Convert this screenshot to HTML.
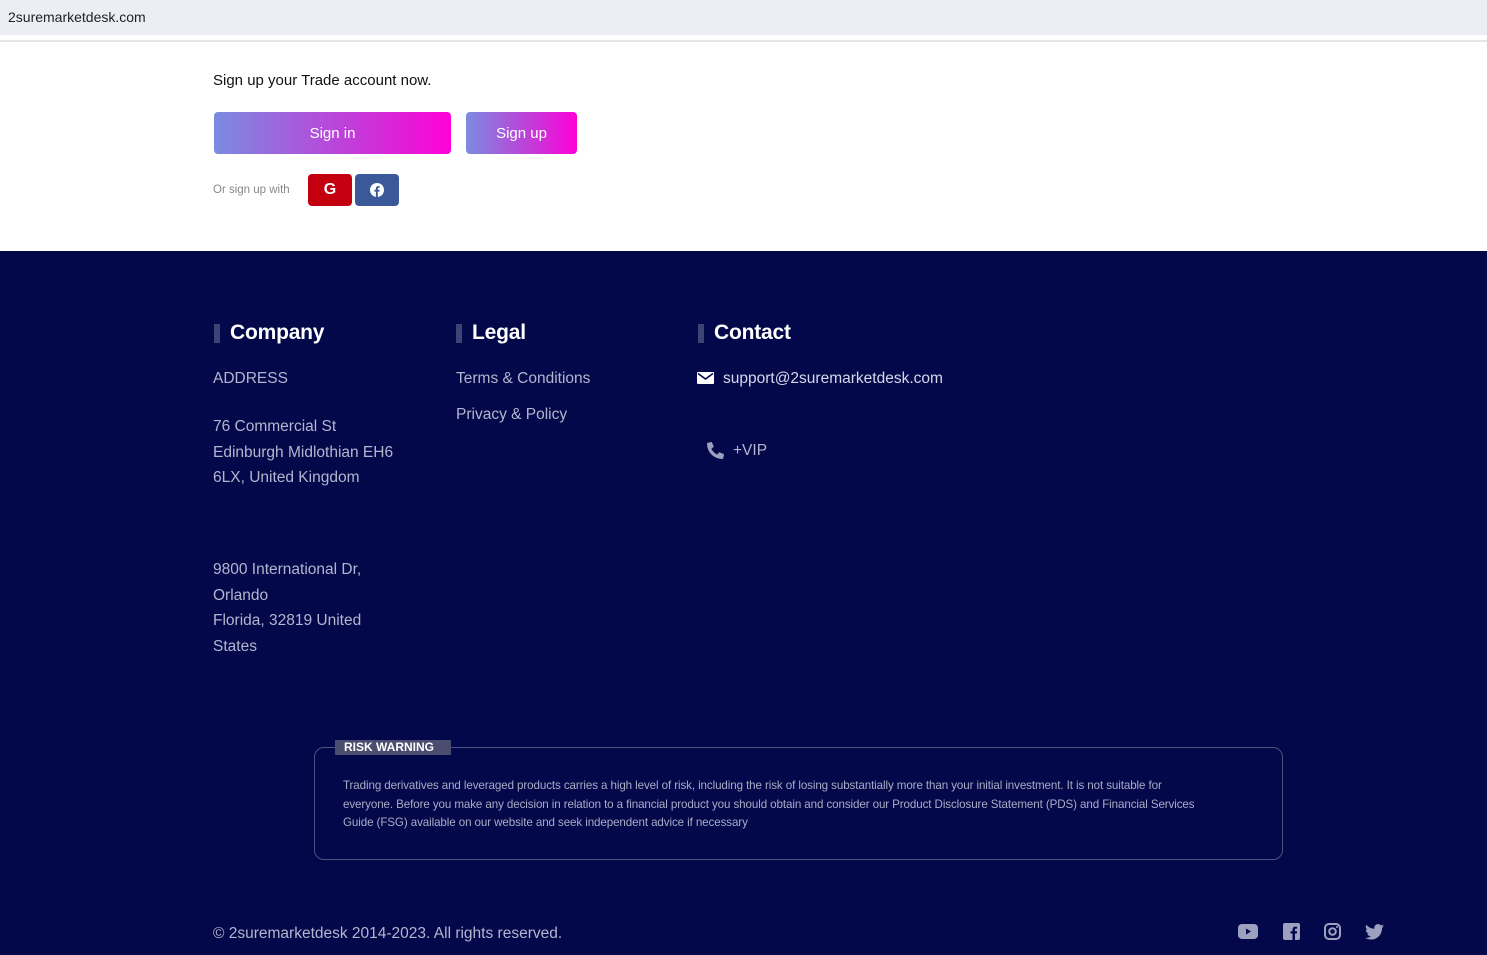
<!DOCTYPE html>
<html><head><meta charset="utf-8"><style>
*{margin:0;padding:0;box-sizing:border-box}
body{width:1487px;height:955px;overflow:hidden;background:#fff;font-family:"Liberation Sans",sans-serif;position:relative}
.a{position:absolute;white-space:nowrap}
.bar{left:0;top:0;width:1487px;height:35px;background:#eceef6}
.btn{height:42px;border-radius:4px;background:linear-gradient(90deg,#7b8be0,#c43ad8 60%,#ff00d8);color:#fff;font-size:15px;display:flex;align-items:center;justify-content:center}
.foot{left:0;top:251px;width:1487px;height:704px;background:#020849}
.h{font-weight:bold;font-size:21px;color:#fff;letter-spacing:-0.2px}
.h:before{content:"";position:absolute;left:-16px;top:3px;width:6px;height:19px;background:#3d4374}
.t{color:#b3b6cf;font-size:15.5px}
</style></head><body>
<div class="a bar"></div>
<div class="a" style="left:8px;top:9px;font-size:14px;color:#222">2suremarketdesk.com</div>
<div class="a" style="left:0;top:40px;width:1487px;height:2px;background:#e6e6e6"></div>
<div class="a" style="left:213px;top:72px;font-size:15px;color:#111">Sign up your Trade account now.</div>
<div class="a btn" style="left:214px;top:112px;width:237px">Sign in</div>
<div class="a btn" style="left:466px;top:112px;width:111px">Sign up</div>
<div class="a" style="left:213px;top:184px;font-size:11.5px;color:#888">Or sign up with</div>
<div class="a" style="left:308px;top:174px;width:44px;height:32px;border-radius:4px;background:#c40010;color:#fff;font-weight:bold;font-size:16px;display:flex;align-items:center;justify-content:center">G</div>
<div class="a" style="left:355px;top:174px;width:44px;height:32px;border-radius:4px;background:#3b5998;display:flex;align-items:center;justify-content:center"><svg width="14" height="14" viewBox="0 0 14 14"><circle cx="7" cy="7" r="7" fill="#fff"/><path d="M7.8 14V8.6h1.6l.3-1.8H7.8V5.7c0-.5.2-.9.9-.9h1V3.2c-.3 0-.8-.1-1.5-.1-1.4 0-2.3.8-2.3 2.4v1.3H4.4v1.8h1.5V14z" fill="#3b5998"/></svg></div>
<div class="a foot"></div>
<div class="a h" style="left:230px;top:321px">Company</div>
<div class="a h" style="left:472px;top:321px">Legal</div>
<div class="a h" style="left:714px;top:321px">Contact</div>
<div class="a t" style="left:213px;top:370px">ADDRESS</div>
<div class="a t" style="left:213px;top:414px;line-height:25.6px">76 Commercial St<br>Edinburgh Midlothian EH6<br>6LX, United Kingdom</div>
<div class="a t" style="left:213px;top:557px;line-height:25.6px">9800 International Dr,<br>Orlando<br>Florida, 32819 United<br>States</div>
<div class="a t" style="left:456px;top:370px">Terms &amp; Conditions</div>
<div class="a t" style="left:456px;top:406px">Privacy &amp; Policy</div>
<svg class="a" style="left:697px;top:372px" width="17" height="12" viewBox="0 0 17 12"><rect x="0" y="0" width="17" height="12" rx="1" fill="#fff"/><path d="M1 1.5l7.5 5.5 7.5-5.5" stroke="#020849" stroke-width="1.6" fill="none"/></svg>
<div class="a t" style="left:723px;top:370px;color:#d6d8ea">support@2suremarketdesk.com</div>
<svg class="a" style="left:707px;top:442px" width="17" height="17" viewBox="0 0 512 512"><path fill="#9da1bf" d="M497 361l-112-48c-9-4-21-1-28 7l-50 61C229 344 167 282 131 205l61-50c8-7 11-18 7-28L151 15c-5-11-16-16-27-14L20 25C9 27 1 37 1 48c0 256 207 463 463 463 11 0 21-8 23-19l24-104c3-11-3-23-14-27z"/></svg>
<div class="a t" style="left:733px;top:442px">+VIP</div>
<div class="a" style="left:314px;top:747px;width:969px;height:113px;border:1px solid #4d5285;border-radius:10px"></div>
<div class="a" style="left:335px;top:740px;width:116px;height:15px;background:#4b4d6e"></div>
<div class="a" style="left:344px;top:740px;font-size:12px;font-weight:bold;color:#fff">RISK WARNING</div>
<div class="a" style="left:343px;top:777px;width:860px;white-space:normal;font-size:11.6px;line-height:18.5px;color:#a9acc6;letter-spacing:-0.1px">Trading derivatives and leveraged products carries a high level of risk, including the risk of losing substantially more than your initial investment. It is not suitable for everyone. Before you make any decision in relation to a financial product you should obtain and consider our Product Disclosure Statement (PDS) and Financial Services Guide (FSG) available on our website and seek independent advice if necessary</div>
<div class="a t" style="left:213px;top:925px">© 2suremarketdesk 2014-2023. All rights reserved.</div>
<svg class="a" style="left:1238px;top:924px" width="20" height="15" viewBox="0 0 20 15"><rect width="20" height="15" rx="4" fill="#9da1bf"/><path d="M8 4.5v6l5-3z" fill="#020849"/></svg>
<svg class="a" style="left:1283px;top:923px" width="17" height="17" viewBox="0 0 17 17"><rect width="17" height="17" rx="2" fill="#9da1bf"/><path d="M9.5 17v-6.5h-2V8.3h2V6.6c0-2 1.2-3 3-3h1.6v2h-1.1c-.8 0-1 .4-1 1v1.7h2.1l-.3 2.2h-1.8V17z" fill="#020849"/></svg>
<svg class="a" style="left:1324px;top:923px" width="17" height="17" viewBox="0 0 17 17"><rect x="1" y="1" width="15" height="15" rx="4" fill="none" stroke="#9da1bf" stroke-width="2"/><circle cx="8.5" cy="8.5" r="3.3" fill="none" stroke="#9da1bf" stroke-width="2"/><circle cx="13" cy="4" r="1" fill="#9da1bf"/></svg>
<svg class="a" style="left:1365px;top:924px" width="19" height="16" viewBox="0 0 24 20"><path fill="#9da1bf" d="M24 2.4c-.9.4-1.8.7-2.8.8 1-.6 1.8-1.6 2.2-2.7-1 .6-2 1-3.1 1.2C19.3.7 18 0 16.6 0c-2.7 0-4.9 2.2-4.9 4.9 0 .4 0 .8.1 1.1C7.7 5.8 4.1 3.9 1.7.9c-.4.7-.7 1.6-.7 2.5 0 1.7.9 3.2 2.2 4.1-.8 0-1.6-.2-2.2-.6v.1c0 2.4 1.7 4.4 3.9 4.8-.4.1-.8.2-1.3.2-.3 0-.6 0-.9-.1.6 2 2.4 3.4 4.6 3.4-1.7 1.3-3.8 2.1-6.1 2.1-.4 0-.8 0-1.2-.1 2.2 1.4 4.8 2.2 7.5 2.2 9.1 0 14-7.5 14-14v-.6c1-.7 1.8-1.6 2.5-2.5z"/></svg>
</body></html>
